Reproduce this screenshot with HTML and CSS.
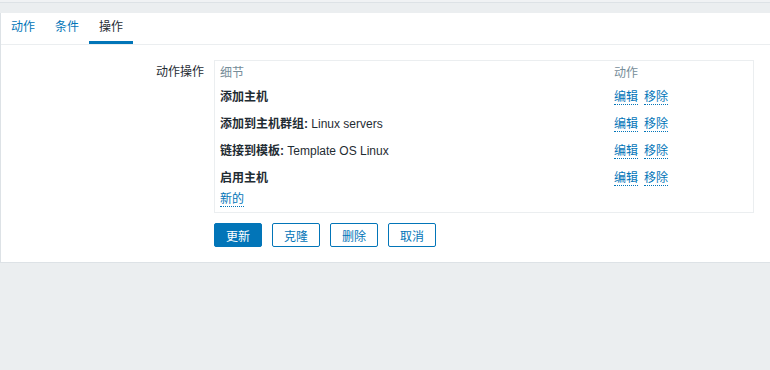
FILE: index.html
```html
<!DOCTYPE html>
<html lang="zh">
<head>
  <meta charset="UTF-8" />
  <meta name="viewport" content="width=device-width, initial-scale=1.0" />
  <title>动作</title>
  <link rel="stylesheet" href="styles.css">
</head>
<body>
  <div class="top-strip"></div>
  <div class="panel">
    <ul class="tabs">
      <li class="tab"><a href="#">动作</a></li>
      <li class="tab"><a href="#">条件</a></li>
      <li class="tab active"><a href="#">操作</a></li>
    </ul>
    <div class="form">
      <div class="form-row">
        <label class="form-label">动作操作</label>
        <div class="form-field">
          <div class="op-box">
            <table class="op-table">
              <thead>
                <tr><th class="col-detail">细节</th><th class="col-action">动作</th></tr>
              </thead>
              <tbody>
                <tr>
                  <td><b>添加主机</b></td>
                  <td><a class="link" href="#">编辑</a><a class="link" href="#">移除</a></td>
                </tr>
                <tr>
                  <td><b>添加到主机群组:</b> Linux servers</td>
                  <td><a class="link" href="#">编辑</a><a class="link" href="#">移除</a></td>
                </tr>
                <tr>
                  <td><b>链接到模板:</b> Template OS Linux</td>
                  <td><a class="link" href="#">编辑</a><a class="link" href="#">移除</a></td>
                </tr>
                <tr>
                  <td><b>启用主机</b></td>
                  <td><a class="link" href="#">编辑</a><a class="link" href="#">移除</a></td>
                </tr>
              </tbody>
            </table>
            <div class="new-row"><a class="link" href="#">新的</a></div>
          </div>
        </div>
      </div>
      <div class="form-row">
        <div class="form-label"></div>
        <div class="form-field buttons">
          <button class="btn primary">更新</button>
          <button class="btn">克隆</button>
          <button class="btn">删除</button>
          <button class="btn">取消</button>
        </div>
      </div>
    </div>
  </div>
</body>
</html>
```

FILE: styles.css
```css
body { margin: 0; background: #ebeef0; color: #1f2c33; font-family: Arial, "Liberation Sans", "Noto Sans CJK SC", sans-serif; font-size: 12px; }
a { text-decoration: none; color: #0275b8; }

.top-strip { height: 2px; background: #f0f2f4; border-bottom: 1px solid #dde2e6; margin-bottom: 10px; }

.panel { background: #fff; border-left: 1px solid #dde2e6; border-bottom: 1px solid #dde2e6; }

.tabs { display: flex; margin: 0; padding: 0; list-style: none; height: 31px; border-bottom: 1px solid #ebeef0; }
.tab a { display: block; height: 28px; line-height: 29px; padding: 0 10px; border-bottom: 3px solid transparent; }
.tab.active a { color: #1f2c33; border-bottom-color: #0275b8; }

.form { padding: 15px 0 15px; }
.form-row { display: grid; grid-template-columns: 203px 540px; column-gap: 10px; }
.form-row + .form-row { margin-top: 10px; }
.form-label { text-align: right; padding-top: 5px; line-height: 14px; }

.op-box { border: 1px solid #ebeef0; padding: 0 0 6px; }
.op-table { width: 100%; border-collapse: collapse; }
.op-table th { text-align: left; font-weight: normal; color: #768d99; height: 21px; padding: 0 5px; vertical-align: middle; }
.op-table td { height: 27px; padding: 0 5px; vertical-align: middle; }
.op-table .col-detail { width: 384px; }
.link { color: #0275b8; border-bottom: 1px dotted #0275b8; margin-right: 6px; }
.new-row { margin-top: 2px; padding: 0 5px; line-height: 14px; }

.buttons { display: flex; gap: 10px; }
.btn { width: 48px; height: 24px; padding: 0; font: inherit; border: 1px solid #0275b8; border-radius: 2px; background: #fff; color: #0275b8; cursor: pointer; }
.btn.primary { background: #0275b8; color: #fff; }
```
